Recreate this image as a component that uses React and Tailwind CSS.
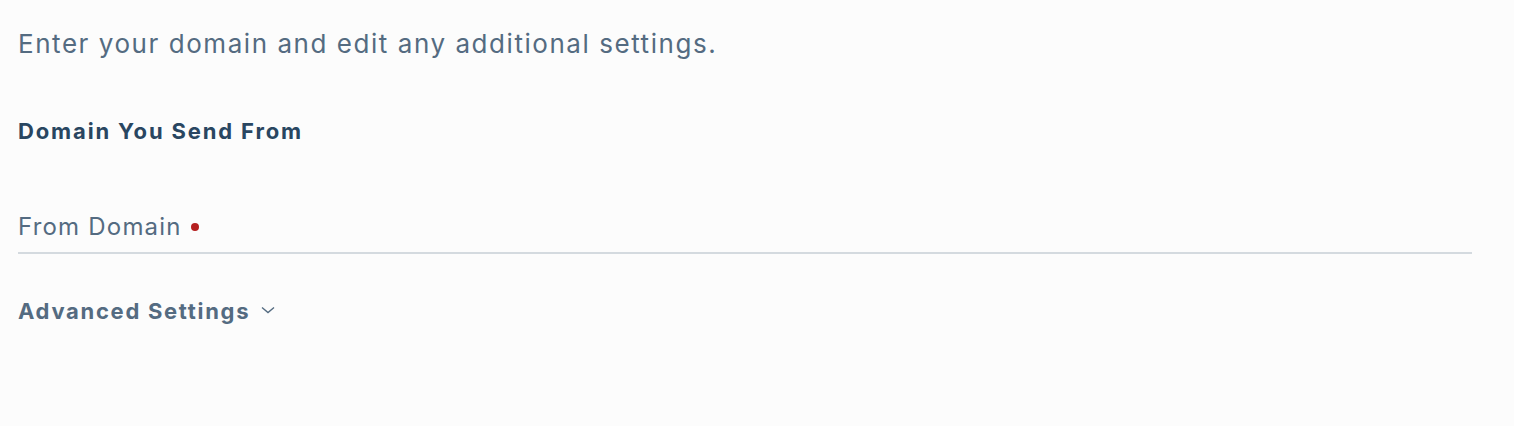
import React from "react";

export default function App() {
  return (
    <div className="min-h-[426px] w-full bg-[#fcfcfc] pl-[18px] pr-[42px] pt-[31px]" style={{ fontFamily: "Inter, 'Noto Sans', sans-serif" }}>
      <p className="text-[26px] leading-[26px] tracking-[1.55px] text-[#546b81]">Enter your domain and edit any additional settings.</p>
      <h2 className="mt-[63px] text-[22px] font-bold leading-[22px] tracking-[1.85px] text-[#294661]">Domain You Send From</h2>
      <div className="mt-[73px] flex items-center gap-[9px] border-b-2 border-[#d4dadf] pb-[13px]">
        <span className="text-[24px] leading-[24px] tracking-[1.2px] text-[#546b81]">From Domain</span>
        <span className="h-[8px] w-[8px] rounded-full bg-[#b51f1f]" />
      </div>
      <button className="mt-[46px] flex items-center gap-[11px] text-[22px] font-bold leading-[22px] tracking-[1.7px] text-[#546b81]">
        Advanced Settings
        <svg width="14" height="8" viewBox="0 0 14 8" fill="none" stroke="#546b81" strokeWidth="1.4" className="-mt-[3px]">
          <path d="M1 1.5 L7 6.5 L13 1.5" />
        </svg>
      </button>
    </div>
  );
}
